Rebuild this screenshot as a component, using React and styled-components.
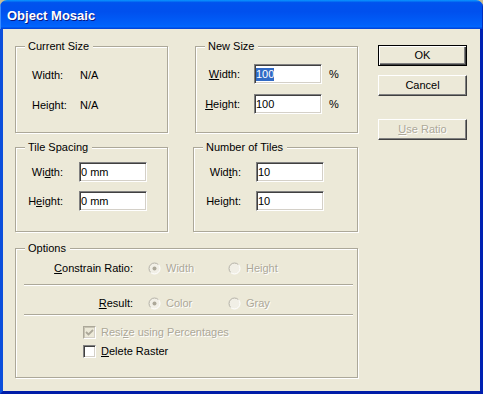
import React from 'react';
import styled, { createGlobalStyle } from 'styled-components';

const Global = createGlobalStyle`
  html, body { margin: 0; padding: 0; background: #C9BC93; }
  body {
    width: 483px; height: 394px; overflow: hidden;
    font-family: "Liberation Sans", Arial, sans-serif; font-size: 11px; color: #000;
  }
  #root { width: 483px; height: 394px; }
`;

const Window = styled.div`
  width: 483px; height: 394px;
  display: flex; flex-direction: column;
  border-radius: 7px 7px 0 0; overflow: hidden;
`;

const TitleBar = styled.div`
  flex: none; height: 29px; box-sizing: border-box;
  display: flex; align-items: center; padding: 3px 7px 0;
  background: linear-gradient(180deg, #0997ff 0%, #0053ee 9%, #0050ee 40%, #0060fa 85%, #0066ff 92%, #0050e6 96%, #003dd7 100%);
  box-shadow: inset 1px 0 #3a8cff, inset -1px 0 #0030c0;
`;

const Title = styled.span`
  font-family: "Liberation Sans", Arial, sans-serif;
  font-weight: bold; font-size: 13px; color: #fff;
  text-shadow: 1px 1px #0a1883;
  line-height: 16px;
`;

const Body = styled.div`
  flex: 1; display: flex; background: #ECE9D8;
  border-left: 3px solid #0b4fdc;
  border-right: 3px solid #0021b2;
  border-bottom: 3px solid #001ca8;
`;

const Groups = styled.div`
  display: grid;
  grid-template-columns: 153px 165px;
  column-gap: 25px; row-gap: 14px;
  align-content: start;
  padding: 17px 0 0 12px;
`;

const Group = styled.div`
  position: relative; box-sizing: border-box;
  height: ${p => p.$h}px;
  margin-left: ${p => p.$ml || 0}px;
  margin-top: ${p => p.$mt || 0}px;
  grid-column: ${p => (p.$span ? '1 / -1' : 'auto')};
  border: 1px solid #ACA899;
  box-shadow: inset 1px 1px #fff, 1px 1px #fff;
  padding: ${p => p.$pad};
  display: flex; flex-direction: column;
`;

const Legend = styled.span`
  position: absolute; top: -7px; left: 9px;
  padding: 0 4px 0 3px; line-height: 13px;
  background: #ECE9D8;
`;

const Row = styled.div`
  display: flex; align-items: center; flex: none;
  height: ${p => p.$h || 20}px;
  margin-top: ${p => p.$mt || 0}px;
  padding-left: ${p => p.$pl || 0}px;
`;

const Label = styled.span`
  flex: none; line-height: 13px; white-space: nowrap;
  width: ${p => p.$w}px;
  margin-right: ${p => p.$mr || 0}px;
  text-align: ${p => (p.$right ? 'right' : 'left')};
`;

const Text = styled.span`
  line-height: 13px; white-space: nowrap;
  color: ${p => (p.$disabled ? '#ACA899' : '#000')};
  text-shadow: ${p => (p.$disabled ? '1px 1px #fff' : 'none')};
  margin-left: ${p => p.$ml || 0}px;
`;

const Field = styled.div`
  flex: none; box-sizing: border-box;
  width: 68px; height: 20px;
  display: flex; align-items: center;
  padding-left: 1px;
  background: #fff;
  border-top: 1px solid #808080; border-left: 1px solid #808080;
  border-bottom: 1px solid #fff; border-right: 1px solid #fff;
  box-shadow: inset 1px 1px #404040, inset -1px -1px #D4D0C8;
  line-height: 13px;
`;

const Selected = styled.span`
  background: #316AC5; color: #fff; line-height: 13px;
`;

const Unit = styled.span`
  margin-left: 7px; line-height: 13px;
`;

const Separator = styled.div`
  flex: none; height: 0;
  border-top: 1px solid #ACA899; border-bottom: 1px solid #fff;
  margin: ${p => p.$mt}px 4px 0 8px;
`;

const RadioItem = styled.span`
  display: flex; align-items: center; flex: none;
  width: ${p => p.$w || 80}px;
`;

const CheckBox = styled.span`
  flex: none; box-sizing: border-box; width: 13px; height: 13px;
  display: flex; align-items: center; justify-content: center;
  background: ${p => (p.$disabled ? '#ECE9D8' : '#fff')};
  border-top: 1px solid ${p => (p.$disabled ? '#ACA899' : '#808080')};
  border-left: 1px solid ${p => (p.$disabled ? '#ACA899' : '#808080')};
  border-bottom: 1px solid #fff; border-right: 1px solid #fff;
  box-shadow: inset 1px 1px ${p => (p.$disabled ? '#C8C4B4' : '#404040')}, inset -1px -1px #D4D0C8;
`;

const Buttons = styled.div`
  display: flex; flex-direction: column; padding: 16px 0 0 20px;
`;

const Button = styled.div`
  box-sizing: border-box; width: 89px; height: 21px;
  margin-top: ${p => p.$mt || 0}px;
  display: flex; align-items: center; justify-content: center;
  line-height: 13px; background: #ECE9D8;
  border: 1px solid ${p => (p.$default ? '#000' : '#fff')};
  border-right-color: ${p => (p.$default ? '#000' : '#404040')};
  border-bottom-color: ${p => (p.$default ? '#000' : '#404040')};
  box-shadow: ${p => (p.$default
    ? 'inset 1px 1px #fff, inset -1px -1px #404040, inset -2px -2px #808080'
    : 'inset -1px -1px #808080')};
  color: ${p => (p.$disabled ? '#ACA899' : '#000')};
  text-shadow: ${p => (p.$disabled ? '1px 1px #fff' : 'none')};
`;

const Radio = ({ checked }) => (
  <svg width="13" height="13" viewBox="0 0 13 13" style={{ flex: 'none' }}>
    <circle cx="6.5" cy="6.5" r="5.5" fill="#F1EFE6" stroke="#fff" />
    <path d="M2.61 10.39 A5.5 5.5 0 0 1 10.39 2.61" fill="none" stroke="#ACA899" />
    {checked && <circle cx="6.5" cy="6.5" r="2" fill="#ACA899" />}
  </svg>
);

const Check = () => (
  <svg width="9" height="9" viewBox="0 0 9 9">
    <path d="M1 4 L3.5 6.5 L8 2" fill="none" stroke="#ACA899" strokeWidth="1.8" />
  </svg>
);

export default function App() {
  return (
    <>
      <Global />
      <Window>
        <TitleBar>
          <Title>Object Mosaic</Title>
        </TitleBar>
        <Body>
          <Groups>
            <Group $h={87} $pad="18px 0 0 16px">
              <Legend>Current Size</Legend>
              <Row>
                <Label $w={48}>Width:</Label>
                <Text>N/A</Text>
              </Row>
              <Row $mt={10}>
                <Label $w={48}>Height:</Label>
                <Text>N/A</Text>
              </Row>
            </Group>

            <Group $h={87} $ml={2} $pad="17px 0 0 0">
              <Legend>New Size</Legend>
              <Row>
                <Label $w={44} $mr={14} $right><u>W</u>idth:</Label>
                <Field><Selected>100</Selected></Field>
                <Unit>%</Unit>
              </Row>
              <Row $mt={10}>
                <Label $w={44} $mr={14} $right><u>H</u>eight:</Label>
                <Field>100</Field>
                <Unit>%</Unit>
              </Row>
            </Group>

            <Group $h={85} $pad="14px 0 0 0">
              <Legend>Tile Spacing</Legend>
              <Row>
                <Label $w={47} $mr={16} $right>Wi<u>d</u>th:</Label>
                <Field>0 mm</Field>
              </Row>
              <Row $mt={9}>
                <Label $w={47} $mr={16} $right>H<u>e</u>ight:</Label>
                <Field>0 mm</Field>
              </Row>
            </Group>

            <Group $h={85} $pad="14px 0 0 0">
              <Legend>Number of Tiles</Legend>
              <Row>
                <Label $w={47} $mr={15} $right>Wid<u>t</u>h:</Label>
                <Field>10</Field>
              </Row>
              <Row $mt={9}>
                <Label $w={47} $mr={15} $right>Hei<u>g</u>ht:</Label>
                <Field>10</Field>
              </Row>
            </Group>

            <Group $h={130} $span $mt={2} $pad="9px 0 0 0">
              <Legend>Options</Legend>
              <Row>
                <Label $w={117} $mr={15} $right><u>C</u>onstrain Ratio:</Label>
                <RadioItem>
                  <Radio checked />
                  <Text $disabled $ml={5}>Width</Text>
                </RadioItem>
                <RadioItem>
                  <Radio />
                  <Text $disabled $ml={5}>Height</Text>
                </RadioItem>
              </Row>
              <Separator $mt={6} />
              <Row $mt={7}>
                <Label $w={117} $mr={15} $right><u>R</u>esult:</Label>
                <RadioItem>
                  <Radio checked />
                  <Text $disabled $ml={5}>Color</Text>
                </RadioItem>
                <RadioItem>
                  <Radio />
                  <Text $disabled $ml={5}>Gray</Text>
                </RadioItem>
              </Row>
              <Separator $mt={1} />
              <Row $h={15} $mt={9} $pl={67}>
                <CheckBox $disabled><Check /></CheckBox>
                <Text $disabled $ml={5}>Resi<u>z</u>e using Percentages</Text>
              </Row>
              <Row $h={15} $mt={4} $pl={67}>
                <CheckBox />
                <Text $ml={5}><u>D</u>elete Raster</Text>
              </Row>
            </Group>
          </Groups>

          <Buttons>
            <Button $default>OK</Button>
            <Button $mt={9}>Cancel</Button>
            <Button $mt={23} $disabled><u>U</u>se Ratio</Button>
          </Buttons>
        </Body>
      </Window>
    </>
  );
}
